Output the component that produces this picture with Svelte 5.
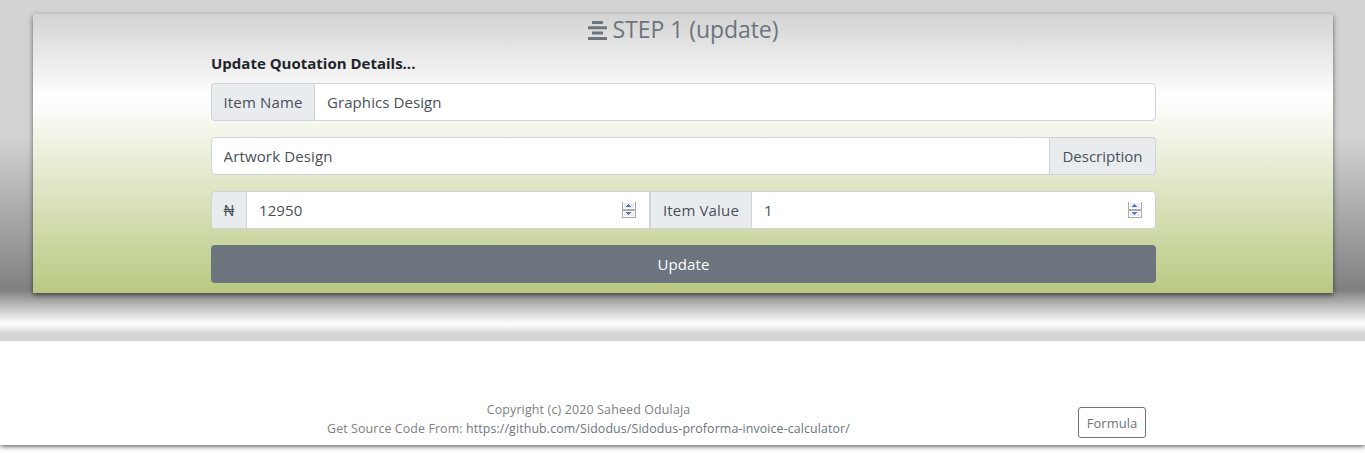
<script>
  let itemName = $state('Graphics Design');
  let description = $state('Artwork Design');
  let price = $state('12950');
  let quantity = $state('1');
</script>

{#snippet spinner()}
  <svg class="spinner" width="14" height="16" viewBox="0 0 14 16" shape-rendering="crispEdges">
    <rect width="14" height="16" fill="#ababab" />
    <rect x="1" width="12" height="7" fill="#fff" />
    <rect x="2" y="1" width="10" height="5" fill="#ececec" />
    <rect x="1" y="9" width="12" height="6" fill="#fff" />
    <rect x="2" y="10" width="10" height="4" fill="#ececec" />
    <path d="M6 2h1v1h1v1h1v1H4V4h1V3h1z" fill="#5871c9" />
    <path d="M4 10h5v1H8v1H7v1H6v-1H5v-1H4z" fill="#5871c9" />
  </svg>
{/snippet}

<div class="screen">
  <div class="page">
    <main>
      <section class="card">
        <h4>
          <svg width="19" height="19" viewBox="0 0 19 19">
            <g fill="#6c757d">
              <rect x="4" y="0" width="11" height="3" rx=".6" />
              <rect x="0" y="5.3" width="19" height="3" rx=".6" />
              <rect x="4" y="10.6" width="11" height="3" rx=".6" />
              <rect x="0" y="16" width="19" height="3" rx=".6" />
            </g>
          </svg>
          <span>STEP 1 (update)</span>
        </h4>
        <form onsubmit={(e) => e.preventDefault()}>
          <div class="label"><b>Update Quotation Details...</b></div>
          <div class="group">
            <span class="addon first name">Item Name</span>
            <input class="last" bind:value={itemName} />
          </div>
          <div class="group">
            <input class="first artwork" bind:value={description} />
            <span class="addon last desc">Description</span>
          </div>
          <div class="group">
            <span class="addon first naira">₦</span>
            <div class="number price"><input bind:value={price} />{@render spinner()}</div>
            <span class="addon value">Item Value</span>
            <div class="number"><input class="last" bind:value={quantity} />{@render spinner()}</div>
          </div>
          <button class="update">Update</button>
        </form>
      </section>
    </main>
    <footer>
      <div class="copy">
        <div class="owner">Copyright (c) 2020 Saheed Odulaja</div>
        <div class="source">Get Source Code From: <a href="https://github.com/Sidodus/Sidodus-proforma-invoice-calculator/">https://github.com/Sidodus/Sidodus-proforma-invoice-calculator/</a></div>
      </div>
      <button class="formula">Formula</button>
    </footer>
  </div>
</div>

<style>
  :global(body) { background: #fff; }
  * { box-sizing: border-box; }
  .screen { height: 453px; overflow: hidden; background: #fff; }
  .page {
    height: 445px;
    background: #fff;
    box-shadow: 0 1px 5px rgba(0, 0, 0, .75);
    font: 15px/24px "Open Sans", "Noto Sans", sans-serif;
    color: #212529;
  }
  main {
    height: 341px;
    padding: 14px 32px 0 33px;
    background: linear-gradient(#d3d3d3 137px, #808080 290px, #fff 324px, #d3d3d3 334px);
  }
  .card {
    height: 279px;
    background: linear-gradient(#d3d3d3, #fff 30%, #b9c981);
    box-shadow: 0 2px 5px rgba(0, 0, 0, .55);
  }
  h4 {
    display: flex;
    align-items: center;
    justify-content: center;
    gap: 6px;
    height: 33px;
    margin: 0;
    color: #6c757d;
    font-size: 23px;
    font-weight: 400;
    line-height: 33px;
    letter-spacing: -.05px;
  }
  h4 span { height: 35px; }
  form { width: 945px; margin-left: 178px; }
  .label { height: 36px; padding-top: 4px; line-height: 24px; }
  .group { display: flex; height: 38px; margin-bottom: 16px; }
  .addon {
    flex: none;
    padding: 6px 0;
    border: 1px solid #ced4da;
    background: #e9ecef;
    color: #495057;
    text-align: center;
    white-space: nowrap;
  }
  .name { width: 103px; border-right: 0; letter-spacing: .15px; }
  .desc { width: 106px; border-left: 0; }
  .naira { width: 35px; border-right: 0; font-family: Lato, "Open Sans", sans-serif; }
  .value { width: 101px; border-right: 0; letter-spacing: .15px; }
  input {
    flex: 1;
    width: 100%;
    min-width: 0;
    height: 38px;
    padding: 6px 12px;
    border: 1px solid #ced4da;
    border-radius: 0;
    outline: 0;
    background: #fff;
    color: #495057;
    font: inherit;
    letter-spacing: .08px;
  }
  .artwork { padding-left: 11.5px; letter-spacing: .15px; }
  .first { border-radius: 4px 0 0 4px; }
  .last { border-radius: 0 4px 4px 0; }
  .number { position: relative; flex: 1; }
  .price { flex: none; width: 404px; }
  .spinner { position: absolute; right: 14px; top: 11px; }
  button { font: inherit; padding: 0; border-radius: 4px; }
  .update {
    display: block;
    width: 100%;
    height: 38px;
    border: 0;
    background: #6c757d;
    color: #fff;
    letter-spacing: .1px;
  }
  footer { display: flex; height: 104px; padding-top: 59px; }
  .copy {
    width: 1023px;
    margin-left: 77px;
    color: #808080;
    font-size: 12.4px;
    letter-spacing: .11px;
    line-height: 19px;
    text-align: center;
  }
  .owner { letter-spacing: .17px; }
  a { color: #6c757d; text-decoration: none; }
  .formula {
    width: 68px;
    height: 31px;
    margin: 7px 0 0 -22px;
    border: 1px solid #6c757d;
    border-radius: 3px;
    background: #fff;
    color: #6c757d;
    font-size: 13px;
  }
</style>
